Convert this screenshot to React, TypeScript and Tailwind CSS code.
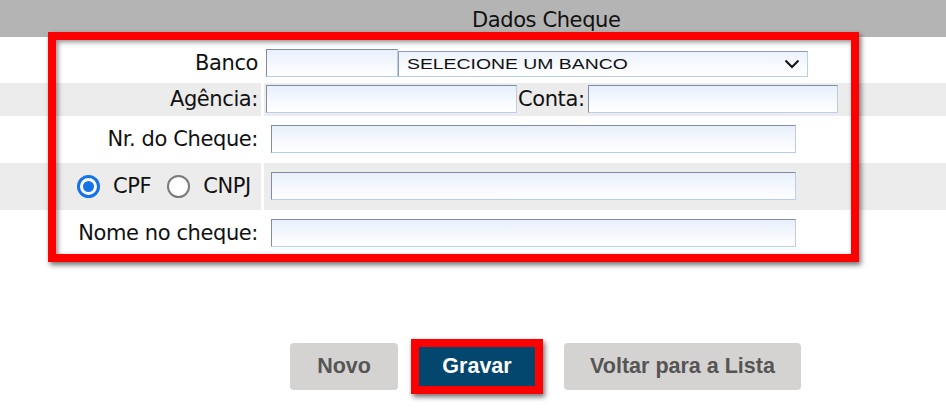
import React from "react";

const label =
  "font-['DejaVu_Sans',sans-serif] text-[21px] tracking-[-0.4px] text-[#111] leading-none whitespace-nowrap";
const inputCls =
  "h-[28px] border border-t-[#7f8ca6] border-l-[#7f8ca6] border-r-[#b7cfec] border-b-[#b7cfec] bg-linear-to-b from-[#e9f0fc] to-white";

function Radio({ checked }: { checked: boolean }) {
  return checked ? (
    <span className="shrink-0 w-[23px] h-[23px] rounded-full border-[3px] border-[#1572e8] bg-white flex items-center justify-center">
      <span className="block w-[11px] h-[11px] rounded-full bg-[#1572e8]" />
    </span>
  ) : (
    <span className="block shrink-0 w-[23px] h-[23px] rounded-full border-2 border-[#7a7a7a] bg-white" />
  );
}

export default function App() {
  return (
    <div className="relative w-[946px] h-[408px] bg-white overflow-hidden">
      {/* header */}
      <div className="h-[37px] bg-[#b4b4b4] flex items-center pl-[472px] pt-[3px]">
        <span className={label}>Dados Cheque</span>
      </div>

      {/* row 1 */}
      <div className="h-[46px] flex items-start pt-[12px]">
        <div className="w-[261px] h-[28px] flex items-center justify-end pr-[3px]">
          <span className={label}>Banco</span>
        </div>
        <div className="w-[3px]" />
        <div className="flex items-start pl-[2px]">
          <div className={`${inputCls} w-[132px]`} />
          <div className="mt-[2px] w-[410px] h-[26px] border border-t-[#8e9ab2] border-l-[#8e9ab2] border-r-[#b7cfec] border-b-[#b7cfec] bg-linear-to-b from-[#edf3fd] to-white flex items-center justify-between pl-[8px] pr-[7px]">
            <span className="inline-block origin-left scale-x-[1.25] font-['Liberation_Sans',sans-serif] text-[15.5px] leading-none text-[#111]">
              SELECIONE UM BANCO
            </span>
            <svg width="16" height="10" viewBox="0 0 16 10">
              <polyline points="1.5,1.5 8,8 14.5,1.5" fill="none" stroke="#111" strokeWidth="2" />
            </svg>
          </div>
        </div>
      </div>

      {/* row 2 */}
      <div className="h-[33px] flex items-start bg-[#ececec] pt-[2px]">
        <div className="w-[261px] h-[28px] flex items-center justify-end pr-[3px]">
          <span className={label}>Agência:</span>
        </div>
        <div className="w-[3px] self-stretch -mt-[2px] bg-white" />
        <div className="flex items-center pl-[2px]">
          <div className={`${inputCls} w-[251px]`} />
          <span className={`${label} ml-[1px]`}>Conta:</span>
          <div className={`${inputCls} w-[250px] ml-[3px]`} />
        </div>
      </div>

      {/* row 3 */}
      <div className="h-[47px] flex items-start pt-[9px]">
        <div className="w-[261px] h-[28px] flex items-center justify-end pr-[3px]">
          <span className={label}>Nr. do Cheque:</span>
        </div>
        <div className="w-[3px]" />
        <div className="pl-[7px]">
          <div className={`${inputCls} w-[525px]`} />
        </div>
      </div>

      {/* row 4 */}
      <div className="h-[47px] flex items-start bg-[#ececec] pt-[9px]">
        <div className="w-[261px] h-[28px] flex items-center pl-[77px]">
          <Radio checked />
          <span className={`${label} ml-[13px]`}>CPF</span>
          <span className="ml-[16px]">
            <Radio checked={false} />
          </span>
          <span className={`${label} ml-[13px]`}>CNPJ</span>
        </div>
        <div className="w-[3px] self-stretch -mt-[9px] bg-white" />
        <div className="pl-[7px]">
          <div className={`${inputCls} w-[525px]`} />
        </div>
      </div>

      {/* row 5 */}
      <div className="h-[46px] flex items-start pt-[9px]">
        <div className="w-[261px] h-[28px] flex items-center justify-end pr-[3px]">
          <span className={label}>Nome no cheque:</span>
        </div>
        <div className="w-[3px]" />
        <div className="pl-[7px]">
          <div className={`${inputCls} w-[525px]`} />
        </div>
      </div>

      {/* buttons */}
      <div className="mt-[83px] flex items-center pl-[290px]">
        <button className="w-[108px] h-[47px] rounded-[4px] bg-[#d5d3d1] font-['Liberation_Sans',sans-serif] font-bold text-[21.5px] text-[#555]">
          Novo
        </button>
        <button className="ml-[13px] w-[132px] h-[55px] border-[8px] border-[#ff0000] bg-[#03466e] font-['Liberation_Sans',sans-serif] font-bold text-[21.5px] text-white shadow-[2px_3px_5px_rgba(0,0,0,0.55)]">
          Gravar
        </button>
        <button className="ml-[21px] w-[237px] h-[47px] rounded-[4px] bg-[#d5d3d1] font-['Liberation_Sans',sans-serif] font-bold text-[21.5px] text-[#555]">
          Voltar para a Lista
        </button>
      </div>

      {/* red annotation box */}
      <div className="absolute left-[48px] top-[32px] w-[811px] h-[230px] border-[8px] border-[#ff0000] shadow-[2px_3px_5px_rgba(0,0,0,0.55),inset_2px_2px_5px_rgba(0,0,0,0.45)] pointer-events-none" />
    </div>
  );
}
